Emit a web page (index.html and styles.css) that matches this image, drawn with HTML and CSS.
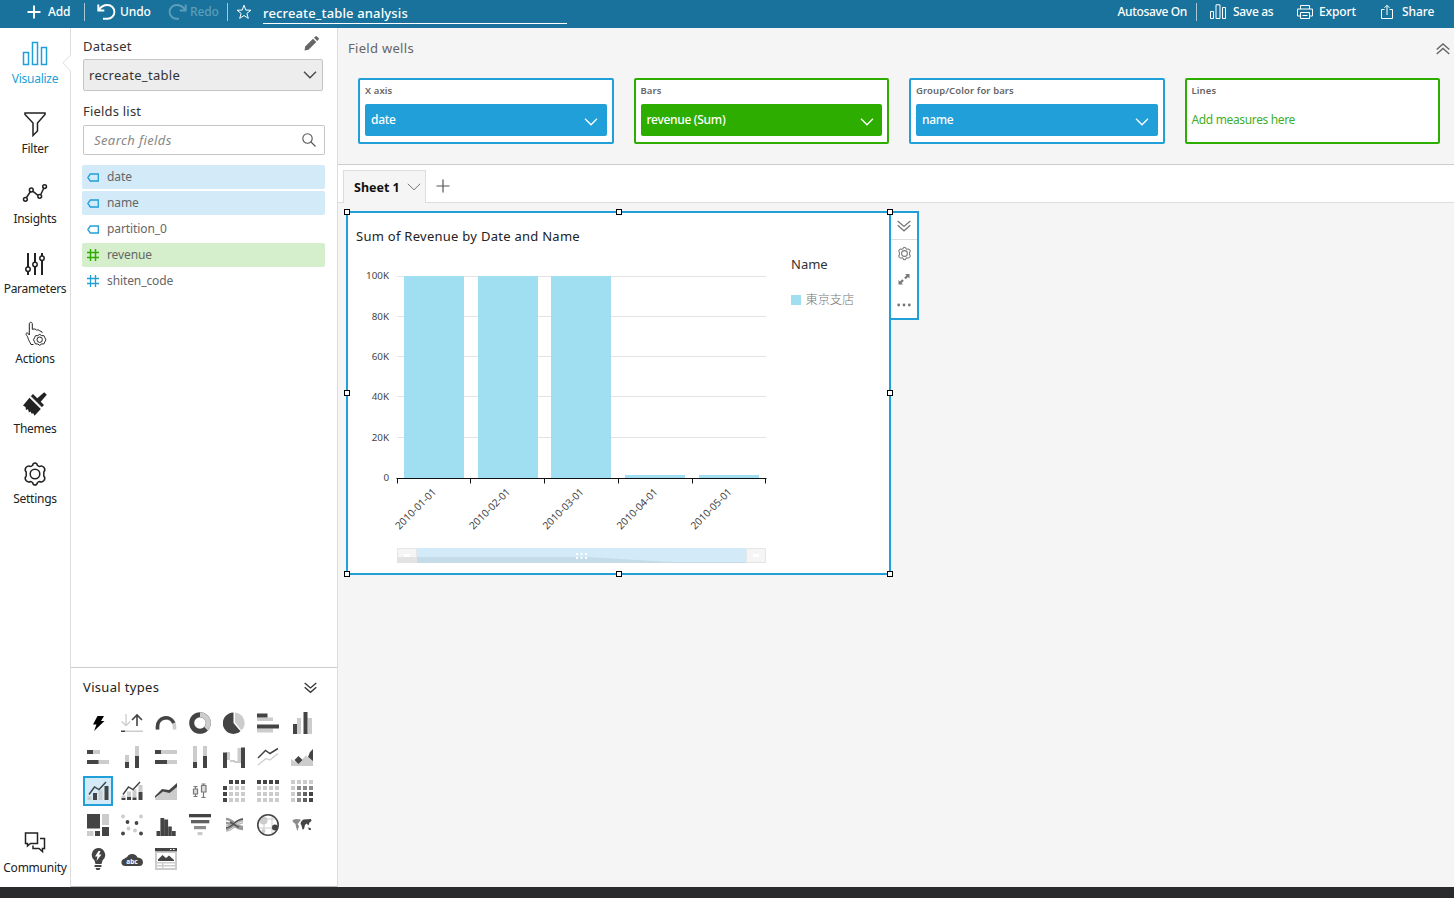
FILE: index.html
```html
<!DOCTYPE html>
<html lang="en">
<head>
<meta charset="utf-8">
<title>recreate_table analysis</title>
<link rel="stylesheet" href="styles.css">
</head>
<body>
<div class="app">
  <header class="topbar">
    <div class="tool tool-add"><svg width="14" height="14" viewBox="0 0 14 14"><path class="ln2" d="M7 .5v13M.5 7h13"/></svg><span>Add</span></div>
    <i class="sep"></i>
    <div class="tool tool-undo"><svg width="19" height="18" viewBox="0 0 19 18"><path class="ln2" d="M1.300 1.500v6h6M1.800 7C4 3.500 7 2 10.500 2a6.800 6.800 0 0 1 0 13.800H6"/></svg><span>Undo</span></div>
    <div class="tool tool-redo"><svg width="19" height="18" viewBox="0 0 19 18"><path class="ln2" d="M17.700 1.500v6h-6M17.200 7C15 3.500 12 2 8.500 2a6.800 6.800 0 0 0 0 13.800H11"/></svg><span>Redo</span></div>
    <i class="sep"></i>
    <svg class="star" width="16" height="16" viewBox="0 0 16 16"><path class="ln" d="M8 1.200l1.800 4.900 5.200.1-4.100 3.200 1.400 5L8 11.500l-4.300 2.900 1.400-5L1 6.200l5.200-.1z"/></svg>
    <div class="name-field">recreate_table analysis</div>
    <div class="topbar-right">
      <span class="autosave">Autosave On</span>
      <i class="sep"></i>
      <div class="tool tool-save"><svg width="16" height="16" viewBox="0 0 16 16"><path class="ln" d="M.5 7.500h3v7h-3zM6 .800h4v13.700H6zM12.500 3.500h3v11h-3z"/></svg><span>Save as</span></div>
      <div class="tool tool-export"><svg width="16" height="16" viewBox="0 0 16 16"><path class="ln" d="M3.500 5V1.500h9V5M3.500 12H.5V5h15v7h-3M3.500 8.500h9v6h-9zM5.500 11.500h5"/></svg><span>Export</span></div>
      <div class="tool tool-share"><svg width="12" height="16" viewBox="0 0 12 16"><path class="ln" d="M3.500 5.500h-3v9h11v-9h-3M6 11V1.500M3.500 3.800L6 1.300l2.500 2.500"/></svg><span>Share</span></div>
    </div>
  </header>

  <div class="workspace">
    <nav class="rail">
      <div class="rail-item active"><svg width="26" height="26" viewBox="0 0 26 26"><path class="st" d="M1.500 11.500h5v12h-5zM10.500 1.500h5v22h-5zM19.500 6.500h5v17h-5z"/></svg><span>Visualize</span></div>
      <div class="rail-item"><svg width="26" height="26" viewBox="0 0 26 26"><path class="st" d="M3 2h20v1.500L15.500 12v8L11 24.500V12L3 3.500z"/></svg><span>Filter</span></div>
      <div class="rail-item"><svg width="26" height="26" viewBox="0 0 26 26"><path class="st" d="M4.500 16.500l4-6M11 10.300l5 4M18.800 13.500l3.200-6.800"/><circle class="st" cx="3.400" cy="18.300" r="1.900"/><circle class="st" cx="9.300" cy="9" r="1.900"/><circle class="st" cx="17.700" cy="15.300" r="1.900"/><circle class="st" cx="22.600" cy="5.600" r="1.900"/></svg><span>Insights</span></div>
      <div class="rail-item"><svg width="26" height="26" viewBox="0 0 26 26"><path class="st heavy" d="M6 2v14M6 20.500V24M13 2v10M13 16v8M20 2v3M20 9.500V24"/><circle class="st" cx="6" cy="18.300" r="2.200"/><circle class="st" cx="13" cy="13.500" r="2.200"/><circle class="st" cx="20" cy="7.300" r="2.200"/></svg><span>Parameters</span></div>
      <div class="rail-item"><svg width="26" height="26" viewBox="0 0 26 26"><path class="st thin" d="M11.500 23.500H9c-1-2.500-2.500-4-3.200-7-.5-2-2-2.500-1.700-4 .5-1 2-.8 3.200 1.500V2.800c0-2 3-2 3 0v5.500c3-.8 3.500 0 4 .8 2.500-.5 3 0 3.500 1 2-.2 2.300 1 2.300 2"/><path class="st thin" d="M17.700 13.300l1.900 1.300 2.300.1 1 2.100 1 2-1 2-1 2.100-2.300.1-1.900 1.300-1.900-1.300-2.300-.1-1-2.100-1-2 1-2 1-2.100 2.300-.1z"/><circle class="st thin" cx="17.700" cy="18.700" r="2.700"/></svg><span>Actions</span></div>
      <div class="rail-item"><svg width="26" height="26" viewBox="0 0 26 26"><path fill="#222" d="M8.500 5.500L11 3l11 11-2.500 2.500zM15 7.500l7.200-6.300 2.600 2.600-6.300 7.200zM7.500 6.700l11.300 11.200-6.300 6.800-1.500-3-1 1.500-1.500-2.800L7 21.500 6 18.300l-2 .7-.5-3L1 14.500z"/><path stroke="#fff" d="M8.500 5.200l12 12"/></svg><span>Themes</span></div>
      <div class="rail-item"><svg width="26" height="26" viewBox="0 0 26 26"><path class="st" d="M13 2q2 0 2.500 2.500 1 .8 2 1Q20 4.300 22 6.500 23.800 9 21.800 11v4q2 2 .2 4.500-2 2.200-4.500 1-1 .3-2 1Q15 24 13 24t-2.500-2.500q-1-.7-2-1-2.500 1.200-4.500-1Q2.200 17 4.200 15v-4Q2.200 9 4 6.500 6 4.300 8.500 5.500q1-.2 2-1Q11 2 13 2z"/><circle class="st" cx="13" cy="13" r="4.800"/></svg><span>Settings</span></div>
      <div class="rail-item community"><svg width="26" height="26" viewBox="0 0 26 26"><path class="st" d="M3.500 3h12v10.500h-7L5.500 16v-2.500h-2zM18 8.500h4.500v10h-2v3l-3.500-3h-6v-3"/></svg><span>Community</span></div>
    </nav>

    <aside class="panel">
      <svg class="notch" width="9" height="18" viewBox="0 0 9 18"><path fill="#fff" stroke="#ddd" d="M9 .5L.8 9 9 17.500"/></svg>
      <div class="panel-head"><span>Dataset</span><svg width="15" height="15" viewBox="0 0 15 15"><path fill="#666" d="M.5 14.500l.7-4L9 2.700 12.300 6l-7.800 7.800zM10 1.800l1.500-1.400q.7-.6 1.400 0l1.700 1.700q.6.700 0 1.400L13.200 5z"/></svg></div>
      <div class="dataset-select"><span>recreate_table</span><svg width="14" height="8" viewBox="0 0 14 8"><path fill="none" stroke="#444" stroke-width="1.300" d="M1 .8l6 6 6-6"/></svg></div>
      <div class="fields-title">Fields list</div>
      <div class="search"><span>Search fields</span><svg width="14" height="14" viewBox="0 0 14 14"><g fill="none" stroke="#555" stroke-width="1.100"><circle cx="5.500" cy="5.500" r="4.700"/><path d="M9 9l4.500 4.500"/></g></svg></div>
      <ul class="fields">
        <li class="dim"><svg width="12" height="9" viewBox="0 0 12 9"><path class="tag" d="M3.300 1h8v7h-8L.8 4.500z"/></svg><span>date</span></li>
        <li class="dim"><svg width="12" height="9" viewBox="0 0 12 9"><path class="tag" d="M3.300 1h8v7h-8L.8 4.500z"/></svg><span>name</span></li>
        <li><svg width="12" height="9" viewBox="0 0 12 9"><path class="tag" d="M3.300 1h8v7h-8L.8 4.500z"/></svg><span>partition_0</span></li>
        <li class="mea"><svg width="12" height="12" viewBox="0 0 12 12"><path class="hash" d="M3.500 0v12M8.500 0v12M0 3.500h12M0 8.500h12"/></svg><span>revenue</span></li>
        <li><svg width="12" height="12" viewBox="0 0 12 12"><path class="tag" d="M3.500 0v12M8.500 0v12M0 3.500h12M0 8.500h12"/></svg><span>shiten_code</span></li>
      </ul>
      <section class="visuals">
        <div class="visuals-head"><span>Visual types</span><svg width="13" height="12" viewBox="0 0 13 12"><path fill="none" stroke="#333" stroke-width="1.300" d="M.7 1l5.800 5L12.300 1M.7 5.300l5.800 5 5.800-5"/></svg></div>
        <div class="types">
          <div class="type"><svg viewBox="0 0 22 22"><path d="M10.500 4H17l-3 5h3.500L7 19l2.500-6.500H6z" fill="#000"/></svg></div>
          <div class="type"><svg viewBox="0 0 22 22"><path d="M5 2v11.500M.8 9.500L5 13.700l4.200-4.200" fill="none" stroke="#ccc" stroke-width="1.300"/><path d="M16 14V3M11 8l5-5 5 5" fill="none" stroke="#444" stroke-width="1.600"/><path class="l" d="M4 18.500h18V20H4z"/><path class="d" d="M0 18.500h4V20H0z"/></svg></div>
          <div class="type"><svg viewBox="0 0 22 22"><path d="M2.500 17.500v-3a8.500 8.500 0 0 1 17 0v3" fill="none" stroke="#ccc" stroke-width="3.600"/><path d="M2.500 17.500v-3a8.500 8.500 0 0 1 16.300-3.500" fill="none" stroke="#444" stroke-width="3.600"/></svg></div>
          <div class="type"><svg viewBox="0 0 22 22"><circle cx="11" cy="11" r="8.300" fill="none" stroke="#444" stroke-width="5"/><path d="M11 2.700a8.300 8.300 0 0 1 6 14" fill="none" stroke="#ccc" stroke-width="5"/></svg></div>
          <div class="type"><svg viewBox="0 0 22 22"><path class="d" d="M10.500.5V11l7 8.300A10.700 10.700 0 1 1 10.500.5z"/><path class="l" d="M12 .5a10.600 10.600 0 0 1 6.500 18L12 10.500z"/></svg></div>
          <div class="type"><svg viewBox="0 0 22 22"><path class="l" d="M0 5.500h16V9H0zM0 16.500h16v4H0z"/><path class="d" d="M0 1.500h10.500v4H0zM0 12.500h22v4H0z"/></svg></div>
          <div class="type"><svg viewBox="0 0 22 22"><path class="l" d="M6 6h4v16H6zM16.500 6h4.500v16h-4.500z"/><path class="d" d="M2 12h4v10H2zM12.500 0h4v22h-4z"/></svg></div>

          <div class="type"><svg viewBox="0 0 22 22"><path class="l" d="M6 4h7v4H6zM11 14h11v4H11z"/><path class="d" d="M0 4h6v4H0zM0 14h11.500v4H0z"/></svg></div>
          <div class="type"><svg viewBox="0 0 22 22"><path class="l" d="M4 9h4v7H4zM14 0h4v10h-4z"/><path class="d" d="M4 16h4v6H4zM14 10h4v12h-4z"/></svg></div>
          <div class="type"><svg viewBox="0 0 22 22"><path class="l" d="M6 4h16v4H6zM12 14h10v4H12z"/><path class="d" d="M0 4h6v4H0zM0 14h12v4H0z"/></svg></div>
          <div class="type"><svg viewBox="0 0 22 22"><path class="l" d="M4 0h4v16H4zM14 0h4v10h-4z"/><path class="d" d="M4 16h4v6H4zM14 10h4v12h-4z"/></svg></div>
          <div class="type"><svg viewBox="0 0 22 22"><path class="l" d="M3.500 6H7v8H3.500zM7 14h5v2H7zM11 15h4v2h-4zM14.500 2H18v15h-3.500z"/><path class="d" d="M0 6.500h4V22H0zM18 1.500h4V22h-4z"/></svg></div>
          <div class="type"><svg viewBox="0 0 22 22"><path d="M1 19l8-6.500 4 1.500 8-6.500" fill="none" stroke="#ccc" stroke-width="1.200"/><path d="M1 12l7.500-7.500 4.500 3 8-5" fill="none" stroke="#444" stroke-width="1.500"/></svg></div>
          <div class="type"><svg viewBox="0 0 22 22"><path class="l" d="M0 13l4 2.500 6-1 5-5 3 3 4 1v6.500H0z"/><path class="d" d="M7.500 10l4 4-4 4-4-4zM22 3v12l-5-4 2-5z"/></svg></div>

          <div class="type selected"><svg viewBox="0 0 22 22"><path class="l" d="M.5 16.500h4V20h-4zM11.500 10.500h4V20h-4z"/><path class="d" d="M6 13h4v7H6zM17.500 6h4v14h-4z"/><path d="M2 14.500l5.500-7.500 4.500 2.500L19 2" fill="none" stroke="#444" stroke-width="1.400"/></svg></div>
          <div class="type"><svg viewBox="0 0 22 22"><path class="l" d="M.5 15.500h4v3h-4zM6 11.500h4v6H6zM11.500 9.500h4v8h-4zM17.500 5h4v7h-4z"/><path class="d" d="M.5 18h4v2h-4zM6 17h4v3H6zM11.500 17.500h4V20h-4zM17.500 12h4v8h-4z"/><path d="M2 14.500l5.500-7.500 4.500 2.500L19 2" fill="none" stroke="#444" stroke-width="1.400"/></svg></div>
          <div class="type"><svg viewBox="0 0 22 22"><path class="l" d="M0 19l8-8 6 1 8-6v14H0z"/><path class="d" d="M0 16L7 9l7 1 8-7v4l-7.500 6-6.500-1.500-8 6.500z"/></svg></div>
          <div class="type"><svg viewBox="0 0 22 22"><path fill="#ddd" stroke="#777" stroke-width="1.200" d="M6.500 6v3M4.500 6.500h4M4.500 9h4v5h-4zM6.500 14v3M4.500 16.500h4M14.500 3.500v2M12.500 4h4M12.500 5.500h4.500V12h-4.500zM14.500 12v6M12.500 17.500h4"/></svg></div>
          <div class="type"><svg viewBox="0 0 22 22"><path class="d" d="M6 0h4v4H6zM12 0h4v4h-4zM18 0h4v4h-4zM0 6h4v4H0zM0 12h4v4H0zM0 18h4v4H0z"/><path class="l" d="M6 6h4v4H6zM12 6h4v4h-4zM18 6h4v4h-4zM6 12h4v4H6zM12 12h4v4h-4zM18 12h4v4h-4zM6 18h4v4H6zM12 18h4v4h-4zM18 18h4v4h-4z"/></svg></div>
          <div class="type"><svg viewBox="0 0 22 22"><path class="d" d="M0 0h4v4H0zM6 0h4v4H6zM12 0h4v4h-4zM18 0h4v4h-4z"/><path class="l" d="M0 6h4v4H0zM0 12h4v4H0zM0 18h4v4H0zM6 6h4v4H6zM12 6h4v4h-4zM18 6h4v4h-4zM6 12h4v4H6zM12 12h4v4h-4zM18 12h4v4h-4zM6 18h4v4H6zM12 18h4v4h-4zM18 18h4v4h-4z"/></svg></div>
          <div class="type"><svg viewBox="0 0 22 22"><path class="l" d="M0 0h4v4H0zM6 0h4v4H6zM12 0h4v4h-4zM18 0h4v4h-4zM0 6h4v4H0zM0 12h4v4H0zM0 18h4v4H0z"/><path class="m" d="M6 6h4v4H6zM12 6h4v4h-4zM18 6h4v4h-4zM6 12h4v4H6zM6 18h4v4H6z"/><path fill="#606060" d="M12 12h4v4h-4zM12 18h4v4h-4z"/><path class="d" d="M18 12h4v4h-4zM18 18h4v4h-4z"/></svg></div>

          <div class="type"><svg viewBox="0 0 22 22"><path class="d" d="M0 0h13v14.500H0zM15 13h7v9h-7zM8 17h5v5H8z"/><path class="l" d="M15 0h7v11h-7zM0 17h6.500v5H0z"/></svg></div>
          <div class="type"><svg viewBox="0 0 22 22"><g class="l"><circle cx="2" cy="2.500" r="1.900"/><circle cx="20" cy="2.500" r="1.900"/><circle cx="7.500" cy="14.500" r="1.900"/><circle cx="14" cy="16.500" r="1.900"/></g><g class="d"><circle cx="6.500" cy="8" r="1.900"/><circle cx="15.500" cy="9" r="1.900"/><circle cx="2" cy="19.500" r="1.900"/><circle cx="20" cy="19.500" r="1.900"/></g></svg></div>
          <div class="type"><svg viewBox="0 0 22 22"><path class="d" d="M1.500 17h3.600v5H1.500zM5.400 4h3.800v18H5.400zM9.300 5.500h3.800V22H9.300zM13.300 12.500h3.500V22h-3.500zM17 17h3.700v5H17z"/></svg></div>
          <div class="type"><svg viewBox="0 0 22 22"><path class="d" d="M0 0h22v3.300H0z"/><path fill="#606060" d="M2 6h18.300v3.300H2z"/><path class="m" d="M5 12h12v3.200H5z"/><path class="l" d="M8.500 18h5v3.200h-5z"/></svg></div>
          <div class="type"><svg viewBox="0 0 22 22"><path d="M3 5c7 0 9 8 17 8M3 9c7 0 10 6 17 6M3 15c7 0 8-9 17-9" stroke="#999" stroke-width="2.600" fill="none"/><path d="M3 17c7 0 10-8 17-8M3 12c7 0 12-5 17-5" stroke="#bbb" fill="none" stroke-width="1.500"/><path d="M3 14c8-1 9-9 17-9M7 8c4 2 5 4 9 5" stroke="#555" fill="none" stroke-width="1.400"/></svg></div>
          <div class="type"><svg viewBox="0 0 22 22"><path d="M1 14h20M7 1v20M15 2v18M4 5h14" stroke="#ccc" fill="none"/><circle class="l" cx="6.500" cy="6.500" r="4"/><circle class="l" cx="6.500" cy="17" r="2"/><circle class="d" cx="18" cy="13.500" r="3"/><circle cx="11" cy="11" r="10.200" fill="none" stroke="#444" stroke-width="1.600"/></svg></div>
          <div class="type"><svg viewBox="0 0 22 22"><path class="m" d="M1.500 6L5 5l5 .5-2 3-1.500 1.500L8 12l-1.500 5L5 13 4.500 10 2 8z"/><path class="d" d="M10.500 7l2-1.500L20 5l.5 2-2 1.500-1 3-2-2-1.500 1.500-1 4-1.500.5-1-4-1-2zM17 13.500l2.500.5.500 2h-2z"/></svg></div>

          <div class="type"><svg viewBox="0 0 22 22"><path class="d" d="M11 0a7 7 0 0 1 4.500 12.500L14.500 16h-6l-1-3.500A7 7 0 0 1 11 0zM7.500 17h7v2h-7zM8.500 20h5l-1 2h-3z"/><path fill="#fff" d="M11.500 3h2l-1.500 3.500h2.500L9.500 13l1-4.500H8z"/></svg></div>
          <div class="type"><svg viewBox="0 0 22 22"><path class="d" d="M3.500 18a3.700 3.700 0 0 1 0-7.300Q4.500 9 6 9.200A5.800 5.800 0 0 1 16.500 9.500Q22 10 22 14.500 21.500 18 18.500 18z"/><text x="11" y="15.500" class="abc">abc</text></svg></div>
          <div class="type"><svg viewBox="0 0 22 22"><path class="l" d="M0 3h22v19H0z"/><path class="d" d="M0 0h22v3.200H0z"/><path fill="#fff" d="M2 5h18v9H2zM2 15.500h5v1.500H2zM8.500 15.500H20v1.500H8.500zM2 18.500h5V20H2zM8.500 18.500H20V20H8.500zM15 1h1.500v1H15zM18 1h1.500v1H18z"/><path class="d" d="M3 13V11.500L7.500 7l3.500 3 3-2.500 5 4.500v1z"/></svg></div>
        </div>
      </section>
    </aside>

    <main class="main">
      <section class="wells">
        <div class="wells-head"><span>Field wells</span><svg width="14" height="12" viewBox="0 0 14 12"><path fill="none" stroke="#666" stroke-width="1.400" d="M.7 6.500L7 1l6.300 5.500M.7 11L7 5.500l6.300 5.500"/></svg></div>
        <div class="wells-grid">
          <div class="well"><label>X axis</label><div class="pill"><span>date</span><svg width="14" height="8" viewBox="0 0 14 8"><path class="chev" d="M1 .8l6 6 6-6"/></svg></div></div>
          <div class="well green"><label>Bars</label><div class="pill"><span>revenue (Sum)</span><svg width="14" height="8" viewBox="0 0 14 8"><path class="chev" d="M1 .8l6 6 6-6"/></svg></div></div>
          <div class="well"><label>Group/Color for bars</label><div class="pill"><span>name</span><svg width="14" height="8" viewBox="0 0 14 8"><path class="chev" d="M1 .8l6 6 6-6"/></svg></div></div>
          <div class="well green"><label>Lines</label><div class="placeholder">Add measures here</div></div>
        </div>
      </section>
      <div class="tabs">
        <div class="tab"><span>Sheet 1</span><svg width="14" height="8" viewBox="0 0 14 8"><path fill="none" stroke="#777" d="M.8.800l6.200 6 6.200-6"/></svg></div>
        <svg class="add-tab" width="14" height="14" viewBox="0 0 14 14"><path stroke="#555" stroke-width="1.200" d="M7 .5v13M.5 7h13"/></svg>
      </div>
      <div class="sheet">
        <article class="card">
          <h2>Sum of Revenue by Date and Name</h2>
          <svg class="chart" width="541" height="323" viewBox="348 250 541 323">
            <path stroke="#e3e3e3" d="M397 276.500h369M397 316.500h369M397 356.500h369M397 396.500h369M397 437.500h369"/>
            <path fill="#a0def1" d="M404 276h60v202h-60zM478 276h60v202h-60zM551 276h60v202h-60zM625 475h60v3h-60zM699 475h60v3h-60z"/>
            <path fill="none" stroke="#111" d="M396.500 478.500h370M397.500 478v5.500M470.500 478v5.500M544.500 478v5.500M618.500 478v5.500M692.500 478v5.500M765.500 478v5.500"/>
            <g class="ylab"><text x="389" y="279">100K</text><text x="389" y="320">80K</text><text x="389" y="360">60K</text><text x="389" y="400">40K</text><text x="389" y="441">20K</text><text x="389" y="481">0</text></g>
            <g class="xlab"><text transform="translate(437 492.500) rotate(-45)">2010-01-01</text><text transform="translate(511 492.500) rotate(-45)">2010-02-01</text><text transform="translate(584.500 492.500) rotate(-45)">2010-03-01</text><text transform="translate(658.500 492.500) rotate(-45)">2010-04-01</text><text transform="translate(732.500 492.500) rotate(-45)">2010-05-01</text></g>
            <path fill="#f5f5f5" stroke="#e6e6e6" d="M397.500 548.500h19v14h-19zM746.500 548.500h19v14h-19z"/>
            <path fill="#d3ebf8" d="M417 548h329v15H417z"/>
            <path fill="#c5dce8" d="M417 557h170l85 5h74v1H417z"/>
            <path fill="#e3e3e3" d="M397 557h20v6h-20zM746 562h20v1h-20z"/>
            <path fill="#fff" d="M404 554h6v3h-6zM753 554h6v3h-6z"/>
            <path fill="#fff" d="M576 553h2v2h-2zM580.500 553h2v2h-2zM585 553h2v2h-2zM576 557h2v2h-2zM580.500 557h2v2h-2zM585 557h2v2h-2z"/>
            <text class="leg-title" x="791" y="269">Name</text>
            <path fill="#a0def1" d="M791 295h10v10h-10z"/>
            <text class="leg-item" x="805.500" y="304">東京支店</text>
          </svg>
          <i class="handle tl"></i><i class="handle tc"></i><i class="handle tr"></i><i class="handle ml"></i><i class="handle mr"></i><i class="handle bl"></i><i class="handle bc"></i><i class="handle br"></i>
        </article>
        <div class="card-tools">
          <div class="ct first"><svg width="14" height="12" viewBox="0 0 14 12"><path fill="none" stroke="#777" stroke-width="1.300" d="M.7 1L7 6.500 13.300 1M.7 5.300L7 10.800l6.300-5.500"/></svg></div>
          <div class="ct"><svg width="15" height="15" viewBox="0 0 26 26"><path fill="none" stroke="#777" stroke-width="1.800" d="M13 2q2 0 2.500 2.500 1 .8 2 1Q20 4.300 22 6.500 23.800 9 21.800 11v4q2 2 .2 4.500-2 2.200-4.500 1-1 .3-2 1Q15 24 13 24t-2.500-2.500q-1-.7-2-1-2.500 1.200-4.500-1Q2.200 17 4.200 15v-4Q2.200 9 4 6.500 6 4.300 8.500 5.500q1-.2 2-1Q11 2 13 2z"/><circle fill="none" stroke="#777" stroke-width="1.800" cx="13" cy="13" r="5"/></svg></div>
          <div class="ct"><svg width="12" height="12" viewBox="0 0 12 12"><path fill="#777" d="M7 1h4.500v4.500L10 4 7.700 6.300 6.200 4.800 8.500 2.500zM5 11.500H.5V7L2 8.500l2.300-2.300 1.500 1.500L3.500 10z"/></svg></div>
          <div class="ct"><svg width="14" height="4" viewBox="0 0 14 4"><g fill="#777"><circle cx="1.700" cy="2" r="1.400"/><circle cx="7" cy="2" r="1.400"/><circle cx="12.300" cy="2" r="1.400"/></g></svg></div>
        </div>
      </div>
    </main>
  </div>
  <div class="os-strip"></div>
</div>
</body>
</html>
```
FILE: styles.css
```css
* { box-sizing: border-box; }
body { margin: 0; font-family: "Noto Sans", "Noto Sans CJK JP", sans-serif; color: #333; background: #fff; }
.app { width: 1454px; height: 898px; display: flex; flex-direction: column; overflow: hidden; }
svg { display: block; flex: none; }

.topbar { height: 28px; flex: none; background: #19729b; display: flex; align-items: center; padding: 0 20px 4px 27px; color: #fff; font-size: 12px; font-weight: 500; }
.tool { display: flex; align-items: center; white-space: nowrap; }
.tool span { line-height: 16px; letter-spacing: -0.1px; }
.tool-add { width: 57px; gap: 7px; }
.tool-undo { margin-left: 12px; width: 71px; gap: 4px; }
.tool-redo { width: 59px; gap: 3px; color: #5c9dbb; }
.tool-redo .ln2 { stroke: #5c9dbb; }
.ln { fill: none; stroke: #fff; stroke-width: 1; }
.ln2 { fill: none; stroke: #fff; stroke-width: 1.900; }
.sep { width: 1px; height: 18px; background: #a9c4d2; flex: none; }
.star { margin-left: 8px; }
.name-field { width: 304px; height: 20px; margin: 4px 0 0 11px; line-height: 19px; border-bottom: 1px solid #fff; font-size: 13px; letter-spacing: 0.140px; flex: none; align-self: flex-start; }
.topbar-right { margin-left: auto; display: flex; align-items: center; }
.autosave { margin-right: 9px; line-height: 16px; letter-spacing: -0.350px; }
.tool-save { margin-left: 13px; gap: 7px; width: 87px; }
.tool-save span { letter-spacing: -0.300px; }
.tool-export { gap: 6px; width: 84px; }
.tool-share { gap: 9px; width: 53px; }

.workspace { height: 859px; flex: none; display: flex; }
.rail { width: 71px; border-right: 1px solid #ddd; flex: none; display: flex; flex-direction: column; padding-top: 13px; }
.rail-item { height: 70px; width: 70px; display: flex; flex-direction: column; align-items: center; gap: 3px; font-size: 12px; color: #222; }
.rail-item span { line-height: 18px; white-space: nowrap; letter-spacing: -0.250px; }
.rail-item.active { color: #219fd9; }
.community { margin: auto 0 -13px; }
.st { fill: none; stroke: #222; stroke-width: 1.500; }
.active .st { stroke: #219fd9; }
.st.heavy { stroke-width: 2; }
.st.thin { stroke-width: 1; }

.panel { width: 267px; border-right: 1px solid #ddd; flex: none; display: flex; flex-direction: column; position: relative; }
.notch { position: absolute; left: -9px; top: 26px; }
.panel-head { display: flex; justify-content: space-between; align-items: flex-start; margin: 8px 18px 0 12px; height: 23px; font-size: 13px; line-height: 20px; letter-spacing: 0.250px; }
.dataset-select { margin: 0 14px 0 12px; height: 32px; border: 1px solid #c4c4c4; background: #ededed; border-radius: 2px; display: flex; align-items: center; justify-content: space-between; padding: 0 5px; font-size: 13px; letter-spacing: 0.300px; }
.fields-title { margin: 10px 12px 0; height: 24px; font-size: 13px; line-height: 20px; letter-spacing: 0.200px; }
.search { margin: 0 12px; height: 30px; border: 1px solid #c4c4c4; border-radius: 2px; display: flex; align-items: center; justify-content: space-between; padding: 0 8px 0 10px; font-size: 13px; font-style: italic; color: #888; letter-spacing: 0.400px; }
.fields { list-style: none; margin: 10px 12px 0 11px; padding: 0; display: flex; flex-direction: column; gap: 2px; font-size: 12px; color: #666; }
.fields li { height: 24px; display: flex; align-items: center; gap: 8px; padding-left: 5px; border-radius: 2px; }
.fields span { padding-bottom: 2px; letter-spacing: -0.100px; }
.dim { background: #d3ebf8; }
.mea { background: #d5efcc; }
.tag { fill: none; stroke: #219fd9; stroke-width: 1.300; }
.hash { fill: none; stroke: #2dad00; stroke-width: 1.500; }
.visuals { margin-top: auto; height: 220px; border-top: 1px solid #ccc; border-bottom: 1px solid #bbb; }
.visuals-head { display: flex; justify-content: space-between; align-items: center; padding: 4px 20px 0 12px; height: 36px; font-size: 13px; color: #222; letter-spacing: 0.330px; }
.visuals-head span { padding-bottom: 2px; }
.types { display: grid; grid-template-columns: repeat(7, 34px); grid-auto-rows: 34px; margin: 2px 0 0 10px; }
.type { width: 30px; height: 30px; margin: 2px; display: flex; align-items: center; justify-content: center; }
.type svg { width: 22px; height: 22px; }
.type.selected { background: #d3ebf8; border: 2px solid #219fd9; }
.d { fill: #444; }
.m { fill: #8c8c8c; }
.l { fill: #ccc; }
.abc { fill: #fff; font-size: 6.500px; font-weight: 700; text-anchor: middle; }

.main { flex: 1; background: #f5f5f5; display: flex; flex-direction: column; }
.wells { height: 137px; border-bottom: 1px solid #ccc; padding: 10px 14px 0 10px; }
.wells-head { display: flex; justify-content: space-between; height: 40px; margin-right: -14px; line-height: 20px; font-size: 13px; color: #666; letter-spacing: 0.300px; }
.wells-head svg { margin: 5px 4px 0 0; }
.wells-grid { display: grid; grid-template-columns: repeat(4, 1fr); gap: 20px; margin-left: 10px; }
.well { height: 66px; border: 2px solid #219fd9; border-radius: 2px; background: #fff; padding: 3px 5px 0; color: #219fd9; }
.well label { display: block; height: 21px; line-height: 15px; font-size: 9.500px; font-weight: 600; color: #666; letter-spacing: 0.100px; }
.pill { height: 32px; border-radius: 2px; background: #219fd9; color: #fff; display: flex; align-items: center; justify-content: space-between; padding: 0 8.500px 0 6px; font-size: 12px; font-weight: 500; letter-spacing: -0.300px; }
.pill span { padding-bottom: 2px; }
.pill svg { margin-top: 3px; }
.chev { fill: none; stroke: #fff; stroke-width: 1.300; }
.well.green { border-color: #2dad00; }
.green .pill { background: #2dad00; }
.placeholder { color: #3fae29; font-size: 12px; line-height: 31px; letter-spacing: -0.350px; }
.tabs { height: 38px; flex: none; background: #fff; border-bottom: 1px solid #ddd; display: flex; padding: 5px 0 0 5px; }
.tab { width: 83px; height: 33px; background: #f5f5f5; border: 1px solid #ddd; border-bottom: 0; display: flex; align-items: center; justify-content: space-between; padding: 1px 4px 0 10px; font-size: 12.500px; font-weight: 700; color: #111; }
.tab svg { margin-bottom: 2px; }
.add-tab { margin: 9px 0 0 10px; }
.sheet { display: flex; align-items: flex-start; padding: 8px 0 0 8px; }
.card { position: relative; width: 545px; height: 364px; border: 2px solid #219fd9; background: #fff; }
.card h2 { margin: 0; padding: 13px 0 0 8px; height: 37px; font-size: 13px; line-height: 20px; font-weight: 400; color: #222; letter-spacing: 0.270px; }
.chart text { font-size: 9.800px; fill: #444; }
.ylab { text-anchor: end; }
.xlab { text-anchor: end; }
.chart .xlab text { font-size: 10.200px; }
.chart .leg-title { font-size: 13px; fill: #333; }
.chart .leg-item { font-size: 12.200px; fill: #777; font-family: "Noto Sans CJK JP", sans-serif; font-weight: 300; }
.handle { position: absolute; width: 6px; height: 6px; border: 1px solid #000; background: #fff; }
.tl, .tc, .tr { top: -4px; }
.ml, .mr { top: 177px; }
.bl, .bc, .br { bottom: -4px; }
.tl, .ml, .bl { left: -4px; }
.tc, .bc { left: 268px; }
.tr, .mr, .br { right: -4px; }
.card-tools { width: 30px; height: 109px; margin-left: -2px; border: 2px solid #219fd9; background: #fff; }
.ct { height: 26px; display: flex; align-items: center; justify-content: center; }
.ct.first { border-bottom: 1px solid #ddd; height: 27px; }
.os-strip { flex: 1; background: #2a2b2d; }
```
